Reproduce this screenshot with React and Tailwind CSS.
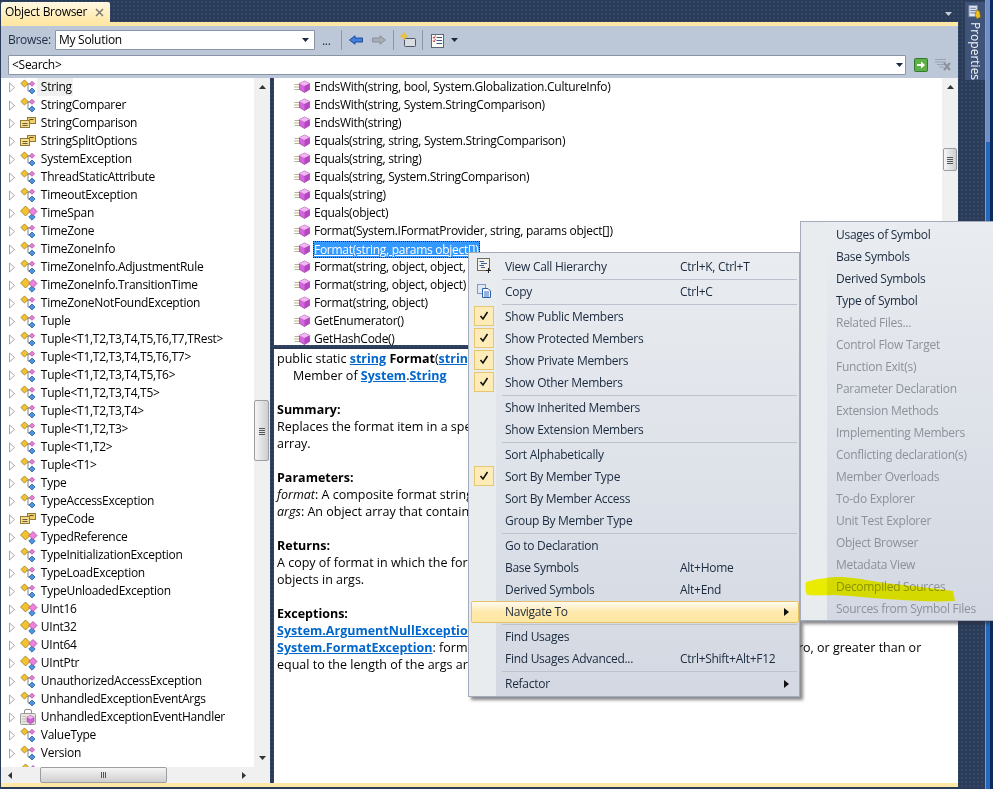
import React from "react";

const Expander = () => (
  <svg width="8" height="11" viewBox="0 0 8 11" className="shrink-0">
    <path d="M1.5 1 L6.5 5.5 L1.5 10 Z" fill="#fff" stroke="#a9a9a9" />
  </svg>
);
const Diamond = ({ cx, cy, r, fill, stroke }) => (
  <path d={`M${cx} ${cy - r} L${cx + r} ${cy} L${cx} ${cy + r} L${cx - r} ${cy} Z`} fill={fill} stroke={stroke} strokeWidth="0.8" />
);
const ClassIcon = () => (
  <svg width="16" height="16" viewBox="0 0 16 16" className="shrink-0">
    <path d="M5 5 H11 M8 5 V12 H11" stroke="#6b7480" fill="none" strokeWidth="0.9" />
    <Diamond cx={4.5} cy={4.5} r={3.6} fill="#f2c230" stroke="#9a7a1a" />
    <Diamond cx={12} cy={4.8} r={2.5} fill="#ee7fd8" stroke="#a04aa0" />
    <Diamond cx={12} cy={12} r={3} fill="#4a94e0" stroke="#2a5f9e" />
  </svg>
);
const StructIcon = () => (
  <svg width="18" height="16" viewBox="0 0 18 16" className="shrink-0">
    <Diamond cx={5.5} cy={6} r={5} fill="#f2c230" stroke="#9a7a1a" />
    <Diamond cx={12} cy={12} r={3.2} fill="#4a94e0" stroke="#2a5f9e" />
    <Diamond cx={13} cy={6.5} r={4} fill="#ee82dc" stroke="#a04aa0" />
  </svg>
);
const EnumIcon = () => (
  <svg width="16" height="16" viewBox="0 0 16 16" className="shrink-0">
    <rect x="7.5" y="2.5" width="8" height="6" fill="#f3cf6a" stroke="#8f7a3c" />
    <path d="M9.5 4.5 H13.5" stroke="#5b4f2c" />
    <rect x="0.5" y="5.5" width="9" height="7" fill="#f6dc8c" stroke="#8f7a3c" />
    <path d="M2.5 8.5 H7.5 M2.5 10.5 H7.5" stroke="#6d5e30" />
  </svg>
);
const DelegateIcon = () => (
  <svg width="16" height="16" viewBox="0 0 16 16" className="shrink-0">
    <path d="M4.5 5 V2 Q4.5 0.5 6 0.5 H10 Q11.5 0.5 11.5 2 V5" fill="none" stroke="#8d8d8d" />
    <rect x="0.5" y="4.5" width="15" height="11" rx="1" fill="#e8e6dc" stroke="#9a9a9a" />
    <path d="M2.5 7.5 H6 M2.5 10 H6 M2.5 12.5 H6" stroke="#c2c0b4" />
    <path d="M10.5 6.5 L14 8.2 V12.6 L10.5 14.8 L7 12.6 V8.2 Z" fill="#cf62d8" stroke="#8e3a9c" strokeWidth="0.6" />
    <path d="M7 8.2 L10.5 10 L14 8.2 L10.5 6.5 Z" fill="#f0b4f0" />
  </svg>
);
const MethodIcon = () => (
  <svg width="16" height="14" viewBox="0 0 16 14" className="shrink-0">
    <path d="M0.5 4.5 H7 M0 7 H7 M0.5 9.5 H7" stroke="#b9b38d" strokeWidth="1" />
    <path d="M10.5 1 L15.5 3.5 V9.5 L10.5 12.5 L5.5 9.5 V3.5 Z" fill="#d565da" stroke="#96409f" strokeWidth="0.7" />
    <path d="M5.5 3.5 L10.5 1 L15.5 3.5 L10.5 6 Z" fill="#f2b8f2" />
    <path d="M10.5 6 L15.5 3.5 V9.5 L10.5 12.5 Z" fill="#b548c2" />
  </svg>
);
const SortDown = ({ className = "", color = "#1c2a40" }) => (
  <svg width="7" height="4" viewBox="0 0 7 4" className={className}><path d="M0 0 H7 L3.5 4 Z" fill={color} /></svg>
);
const Grip = ({ vertical }) => (
  <svg width="8" height="8" viewBox="0 0 8 8">
    {vertical
      ? <path d="M1 1.5 H7 M1 3.5 H7 M1 5.5 H7 M1 7.5 H7" stroke="#555" />
      : <path d="M1.5 1 V7 M3.5 1 V7 M5.5 1 V7" stroke="#555" />}
  </svg>
);

const C = ClassIcon, S = StructIcon, E = EnumIcon, D = DelegateIcon;
const types = [
  ["String", C], ["StringComparer", C], ["StringComparison", E], ["StringSplitOptions", E],
  ["SystemException", C], ["ThreadStaticAttribute", C], ["TimeoutException", C], ["TimeSpan", S],
  ["TimeZone", C], ["TimeZoneInfo", C], ["TimeZoneInfo.AdjustmentRule", C], ["TimeZoneInfo.TransitionTime", S],
  ["TimeZoneNotFoundException", C], ["Tuple", C], ["Tuple<T1,T2,T3,T4,T5,T6,T7,TRest>", C], ["Tuple<T1,T2,T3,T4,T5,T6,T7>", C],
  ["Tuple<T1,T2,T3,T4,T5,T6>", C], ["Tuple<T1,T2,T3,T4,T5>", C], ["Tuple<T1,T2,T3,T4>", C], ["Tuple<T1,T2,T3>", C],
  ["Tuple<T1,T2>", C], ["Tuple<T1>", C], ["Type", C], ["TypeAccessException", C], ["TypeCode", E],
  ["TypedReference", S], ["TypeInitializationException", C], ["TypeLoadException", C], ["TypeUnloadedException", C],
  ["UInt16", S], ["UInt32", S], ["UInt64", S], ["UIntPtr", S], ["UnauthorizedAccessException", C],
  ["UnhandledExceptionEventArgs", C], ["UnhandledExceptionEventHandler", D], ["ValueType", C], ["Version", C], ["", S],
];
const members = [
  "EndsWith(string, bool, System.Globalization.CultureInfo)", "EndsWith(string, System.StringComparison)", "EndsWith(string)",
  "Equals(string, string, System.StringComparison)", "Equals(string, string)", "Equals(string, System.StringComparison)",
  "Equals(string)", "Equals(object)", "Format(System.IFormatProvider, string, params object[])", "Format(string, params object[])",
  "Format(string, object, object, object)", "Format(string, object, object)", "Format(string, object)", "GetEnumerator()", "GetHashCode()",
];

const Sep = () => (
  <div className="h-[3px] flex items-center pl-[33px] pr-[2px]"><div className="h-px w-full bg-[#bcc2ce]" /></div>
);
const Arrow = () => (
  <svg width="5" height="8" viewBox="0 0 5 8" className="absolute right-[10px] top-[7px]"><path d="M0 0 L5 4 L0 8 Z" fill="#111" /></svg>
);
const Item = ({ label, sc, check, icon, sub, active }) => (
  <div className="relative h-[22px] flex items-center pl-[36px] whitespace-nowrap">
    {active && <div className="absolute left-[2px] right-0 inset-y-0 rounded-[2px] border border-[#e5c365] bg-gradient-to-b from-[#fffbf0] via-[#ffe9ab] to-[#ffe7a2]" />}
    {check && (
      <div className="absolute left-[5px] top-0 w-[20px] h-[20px] bg-[#fdecb8] border border-[#e8c56e] flex items-center justify-center">
        <svg width="10" height="10" viewBox="0 0 10 10"><path d="M1.5 5 L4 8 L8.5 1" fill="none" stroke="#111" strokeWidth="1.6" /></svg>
      </div>
    )}
    {icon && <div className="absolute left-[7px] top-[2px]">{icon}</div>}
    <span className="relative">{label}</span>
    {sc && <span className="absolute left-[211px]">{sc}</span>}
    {sub && <Arrow />}
  </div>
);
const HierIcon = () => (
  <svg width="16" height="16" viewBox="0 0 16 16">
    <rect x="1.5" y="0.5" width="12" height="12" fill="#f4f2e8" stroke="#6b6b5e" />
    <path d="M3.5 3.5 H8 M5 5.5 H11 M3.5 7.5 H8 M5 9.5 H9" stroke="#3b5f99" />
    <path d="M12.5 10 V15 M10 12.5 H15" stroke="#222" />
  </svg>
);
const CopyIcon = () => (
  <svg width="16" height="16" viewBox="0 0 16 16">
    <rect x="1.5" y="1.5" width="8" height="9" fill="#dfe8f6" stroke="#7d9ac8" />
    <path d="M6.5 5.5 H12 L14.5 8 V14.5 H6.5 Z" fill="#f5f8fd" stroke="#2f5fa6" />
    <path d="M8 9 H13 M8 11 H13 M8 13 H13" stroke="#3a6fb8" />
  </svg>
);

const Sub = ({ label, on }) => (
  <div className={`h-[22px] flex items-center pl-[35px] whitespace-nowrap ${on ? "text-[#1b2a3e]" : "text-[#8c919a]"}`}>{label}</div>
);
const Link = ({ children }) => <span className="text-[#0066cc] underline font-bold">{children}</span>;
const Line = ({ children, className = "" }) => <div className={`h-[17px] leading-[17px] whitespace-nowrap ${className}`}>{children}</div>;

export default function App() {
  return (
    <div className="relative w-[993px] h-[789px] overflow-hidden flex bg-[#2b3c59] bg-[radial-gradient(#34486a_1px,transparent_1px)] bg-[length:4px_4px] text-[12px] text-black font-['Open_Sans','Noto_Sans',sans-serif] tracking-[-0.28px]">
      <div className="w-[958px] flex flex-col pl-px">
        {/* tab strip */}
        <div className="h-[22px] pt-[2px] flex justify-between">
          <div className="w-[109px] rounded-t-[2px] bg-gradient-to-b from-[#fff8e4] to-[#ffe8a6] flex items-center pl-[4px] pr-[6px] justify-between">
            <span>Object Browser</span>
            <svg width="9" height="9" viewBox="0 0 9 9"><path d="M1 1 L8 8 M8 1 L1 8" stroke="#7a7a70" strokeWidth="1.5" /></svg>
          </div>
          <div className="pr-[6px] pt-[10px]"><SortDown color="#c6ccd6" /></div>
        </div>
        <div className="h-[4px] bg-[#ffe8a6]" />
        {/* toolbar */}
        <div className="h-[52px] bg-[#bcc7d8] pl-[7px] pt-[4px] flex flex-col gap-[5px]">
          <div className="h-[20px] flex items-center">
            <span className="w-[47px] text-[#1e2d44]">Browse:</span>
            <div className="w-[260px] h-[20px] bg-white border border-[#8a94a7] rounded-[1px] flex items-center justify-between pl-[3px] pr-[5px]">
              <span>My Solution</span><SortDown />
            </div>
            <span className="ml-[7px] w-[19px] pt-[1px] text-[#1e2d44]">...</span>
            <div className="w-px h-[20px] bg-[#8a96aa]" />
            <svg width="14" height="10" viewBox="0 0 14 10" className="ml-[7px]"><path d="M0.5 5 L6 0.8 V3 H13.5 V7 H6 V9.2 Z" fill="#3f7fd8" stroke="#1d4c96" /></svg>
            <svg width="14" height="10" viewBox="0 0 14 10" className="ml-[9px]"><path d="M13.5 5 L8 0.8 V3 H0.5 V7 H8 V9.2 Z" fill="#a8adb5" stroke="#8b9099" /></svg>
            <div className="w-px h-[20px] bg-[#8a96aa] ml-[7px]" />
            <svg width="16" height="16" viewBox="0 0 16 16" className="ml-[6px]">
              <rect x="4.5" y="6.5" width="11" height="8" rx="1" fill="#d9dde2" stroke="#4c5666" />
              <path d="M4 0.5 V7.5 M0.5 4 H7.5" stroke="#e6c13c" strokeWidth="2.4" />
            </svg>
            <div className="w-px h-[20px] bg-[#8a96aa] ml-[6px]" />
            <svg width="15" height="15" viewBox="0 0 15 15" className="ml-[7px]">
              <rect x="1.5" y="1.5" width="12" height="13" fill="#fbfbf6" stroke="#5c6678" />
              <path d="M6.5 4.5 H12 M6.5 7.5 H12 M6.5 10.5 H12" stroke="#35558c" />
              <path d="M3 4 L4 5.5 L5.5 2.5 M3 7.5 L4 9 L5.5 6" fill="none" stroke="#d03a3a" />
            </svg>
            <SortDown className="ml-[6px]" />
          </div>
          <div className="h-[20px] flex items-center">
            <div className="w-[898px] h-[20px] bg-white border border-[#8a94a7] rounded-[1px] flex items-center justify-between pl-[3px] pr-[2px]">
              <span>&lt;Search&gt;</span><SortDown />
            </div>
            <svg width="14" height="14" viewBox="0 0 14 14" className="ml-[8px]">
              <rect x="0.5" y="0.5" width="13" height="13" rx="1" fill="#5fae4a" stroke="#2f7a2c" />
              <path d="M3 6 H7 V3.5 L11 7 L7 10.5 V8 H3 Z" fill="#fff" />
            </svg>
            <svg width="17" height="14" viewBox="0 0 17 14" className="ml-[7px] -mt-[2px]">
              <path d="M0 2.5 H11 M0 5 H11 M2 7.5 H9 M4 10 H9" stroke="#9aa2ae" />
              <path d="M9 6 L15 13 M15 6 L9 13" stroke="#8a8f98" strokeWidth="2" />
            </svg>
          </div>
        </div>
        {/* body */}
        <div className="h-[705px] flex">
          {/* left */}
          <div className="w-[269px] flex flex-col bg-white">
            <div className="h-[689px] flex">
              <div className="w-[253px] overflow-hidden">
                {types.map(([name, Icon], i) => (
                  <div key={i} className="h-[18px] flex items-center pl-[7px] whitespace-nowrap">
                    <Expander />
                    <div className="ml-[4px] w-[19px] h-[16px] flex items-center"><Icon /></div>
                    {name && <span className={`h-[18px] leading-[18px] px-[1px] ml-[-2px] ${i === 0 ? "bg-[#f0f0f0]" : ""}`}>&nbsp;{name}</span>}
                  </div>
                ))}
              </div>
              <div className="w-[16px] bg-[#f0f0f0] relative flex flex-col items-center justify-between py-[7px]">
                <svg width="7" height="4" viewBox="0 0 7 4"><path d="M0 4 H7 L3.5 0 Z" fill="#333" /></svg>
                <div className="absolute left-0 top-[322px] w-[15px] h-[61px] rounded-[2px] border border-[#9b9ea3] bg-gradient-to-r from-[#f5f5f5] to-[#cfcfcf] flex items-center justify-center"><Grip vertical /></div>
                <SortDown color="#333" />
              </div>
            </div>
            <div className="h-[16px] bg-[#f0f0f0] relative flex items-center justify-between pl-[7px] pr-[24px]">
              <svg width="4" height="7" viewBox="0 0 4 7"><path d="M4 0 V7 L0 3.5 Z" fill="#333" /></svg>
              <div className="absolute left-[39px] top-0 w-[127px] h-[16px] rounded-[2px] border border-[#9b9ea3] bg-gradient-to-b from-[#f5f5f5] to-[#cfcfcf] flex items-center justify-center"><Grip /></div>
              <svg width="4" height="7" viewBox="0 0 4 7"><path d="M0 0 V7 L4 3.5 Z" fill="#333" /></svg>
            </div>
          </div>
          <div className="w-[4px]" />
          {/* right */}
          <div className="w-[684px] flex flex-col">
            <div className="h-[267px] flex bg-white">
              <div className="w-[668px] overflow-hidden">
                {members.map((m, i) => (
                  <div key={m} className="h-[18px] flex items-center pl-[20px] whitespace-nowrap">
                    <MethodIcon />
                    {i === 9
                      ? <span className="ml-[3px] h-[17px] leading-[15px] bg-[#3399ff] text-white underline border border-dotted border-[#222]">{m}</span>
                      : <span className="ml-[4px]">{m}</span>}
                  </div>
                ))}
              </div>
              <div className="w-[16px] bg-[#f0f0f0] relative flex flex-col items-center py-[7px]">
                <svg width="7" height="4" viewBox="0 0 7 4"><path d="M0 4 H7 L3.5 0 Z" fill="#333" /></svg>
                <div className="absolute left-px top-[70px] w-[14px] h-[23px] rounded-[2px] border border-[#9b9ea3] bg-gradient-to-r from-[#f5f5f5] to-[#cfcfcf] flex items-center justify-center"><Grip vertical /></div>
              </div>
            </div>
            <div className="h-[4px]" />
            <div className="h-[434px] bg-white pl-[3px] pt-[1px] overflow-hidden text-[12.5px] tracking-normal">
              <Line>public static <Link>string</Link> <b>Format</b>(<Link>string</Link>, params <Link>object[]</Link> args)</Line>
              <Line className="pl-[16px]">Member of <Link>System</Link>.<Link>String</Link></Line>
              <Line />
              <Line><b>Summary:</b></Line>
              <Line>Replaces the format item in a specified string with the string representation of a corresponding object in a specified</Line>
              <Line>array.</Line>
              <Line />
              <Line><b>Parameters:</b></Line>
              <Line><i>format</i>: A composite format string.</Line>
              <Line><i>args</i>: An object array that contains zero or more objects to format.</Line>
              <Line />
              <Line><b>Returns:</b></Line>
              <Line>A copy of format in which the format items have been replaced by the string representation of the corresponding</Line>
              <Line>objects in args.</Line>
              <Line />
              <Line><b>Exceptions:</b></Line>
              <Line><Link>System.ArgumentNullException</Link>: format or args is null.</Line>
              <Line><Link>System.FormatException</Link>: format is invalid.-or- The index of a format item is less than zero, or greater than or</Line>
              <Line>equal to the length of the args array.</Line>
            </div>
          </div>
        </div>
        <div className="h-[4px] bg-[#ffe8a6]" />
      </div>

      {/* right rail */}
      <div className="flex-1 pl-[7px] flex">
        <div className="w-[20px] h-[78px] mt-[2px] bg-[#3f5478] flex flex-col items-center pt-[3px]">
          <svg width="14" height="16" viewBox="0 0 14 16">
            <rect x="0.5" y="0.5" width="9" height="12" fill="#dfe6f2" stroke="#7f8fa8" />
            <path d="M2 3.5 H8 M2 6 H8 M2 8.5 H8" stroke="#5c6f90" />
            <path d="M9 5 L12 7 L13 13 L9 15 L7 10 Z" fill="#f0c020" stroke="#6d5a10" strokeWidth="0.6" />
          </svg>
          <span className="[writing-mode:vertical-rl] text-[#f2f5fa] mt-[2px] leading-[20px] tracking-normal">Properties</span>
        </div>
        <div className="w-px bg-[#8a9ab8]" />
        <div className="w-[4px] bg-gradient-to-b from-[#6f8fc8] from-[18%] to-[#2368bd] to-[18%]" />
        <div className="flex-1 bg-[#0c2b5c]" />
      </div>

      {/* context menu */}
      <div className="absolute left-[468px] top-[252px] w-[332px] h-[445px] border border-[#a4acbb] pt-[3px] text-[#1b2a3e] shadow-[3px_3px_3px_rgba(40,40,50,0.55)] bg-gradient-to-b from-[#e9ecf0] to-[#d3d8e2]">
        <div className="absolute left-0 top-0 bottom-0 w-[27px] bg-[#e9ecef]" />
        <div className="relative">
          <Item label="View Call Hierarchy" sc="Ctrl+K, Ctrl+T" icon={<HierIcon />} />
          <Sep />
          <Item label="Copy" sc="Ctrl+C" icon={<CopyIcon />} />
          <Sep />
          <Item label="Show Public Members" check />
          <Item label="Show Protected Members" check />
          <Item label="Show Private Members" check />
          <Item label="Show Other Members" check />
          <Sep />
          <Item label="Show Inherited Members" />
          <Item label="Show Extension Members" />
          <Sep />
          <Item label="Sort Alphabetically" />
          <Item label="Sort By Member Type" check />
          <Item label="Sort By Member Access" />
          <Item label="Group By Member Type" />
          <Sep />
          <Item label="Go to Declaration" />
          <Item label="Base Symbols" sc="Alt+Home" />
          <Item label="Derived Symbols" sc="Alt+End" />
          <Item label="Navigate To" sub active />
          <Sep />
          <Item label="Find Usages" />
          <Item label="Find Usages Advanced..." sc="Ctrl+Shift+Alt+F12" />
          <Sep />
          <Item label="Refactor" sub />
        </div>
      </div>

      {/* submenu */}
      <div className="absolute left-[800px] top-[221px] w-[200px] h-[400px] border border-[#a4acbb] pt-[2px] shadow-[3px_3px_3px_rgba(40,40,50,0.55)] bg-gradient-to-b from-[#e9ecf0] to-[#d3d8e2]">
        <div className="absolute left-0 top-0 bottom-0 w-[26px] bg-[#e9ecef]" />
        <div className="relative">
          {["Usages of Symbol", "Base Symbols", "Derived Symbols", "Type of Symbol"].map((s) => <Sub key={s} label={s} on />)}
          {["Related Files...", "Control Flow Target", "Function Exit(s)", "Parameter Declaration", "Extension Methods", "Implementing Members", "Conflicting declaration(s)", "Member Overloads", "To-do Explorer", "Unit Test Explorer", "Object Browser", "Metadata View", "Decompiled Sources", "Sources from Symbol Files"].map((s) => <Sub key={s} label={s} />)}
        </div>
        {/* marker-pen stroke drawn over the menu */}
        <svg width="160" height="30" viewBox="0 0 160 30" className="absolute left-[4px] top-[354px] mix-blend-multiply">
          <path d="M1 6 C10 3 25 1 36 1 C55 2 65 5 80 7 C105 10 130 12 148 15 L150 25 C130 26 115 25 97 24 C75 23 50 20 29 19 C20 19 10 20 2 19 C0 14 0 10 1 6 Z" fill="#ffff00" />
        </svg>
      </div>
    </div>
  );
}
